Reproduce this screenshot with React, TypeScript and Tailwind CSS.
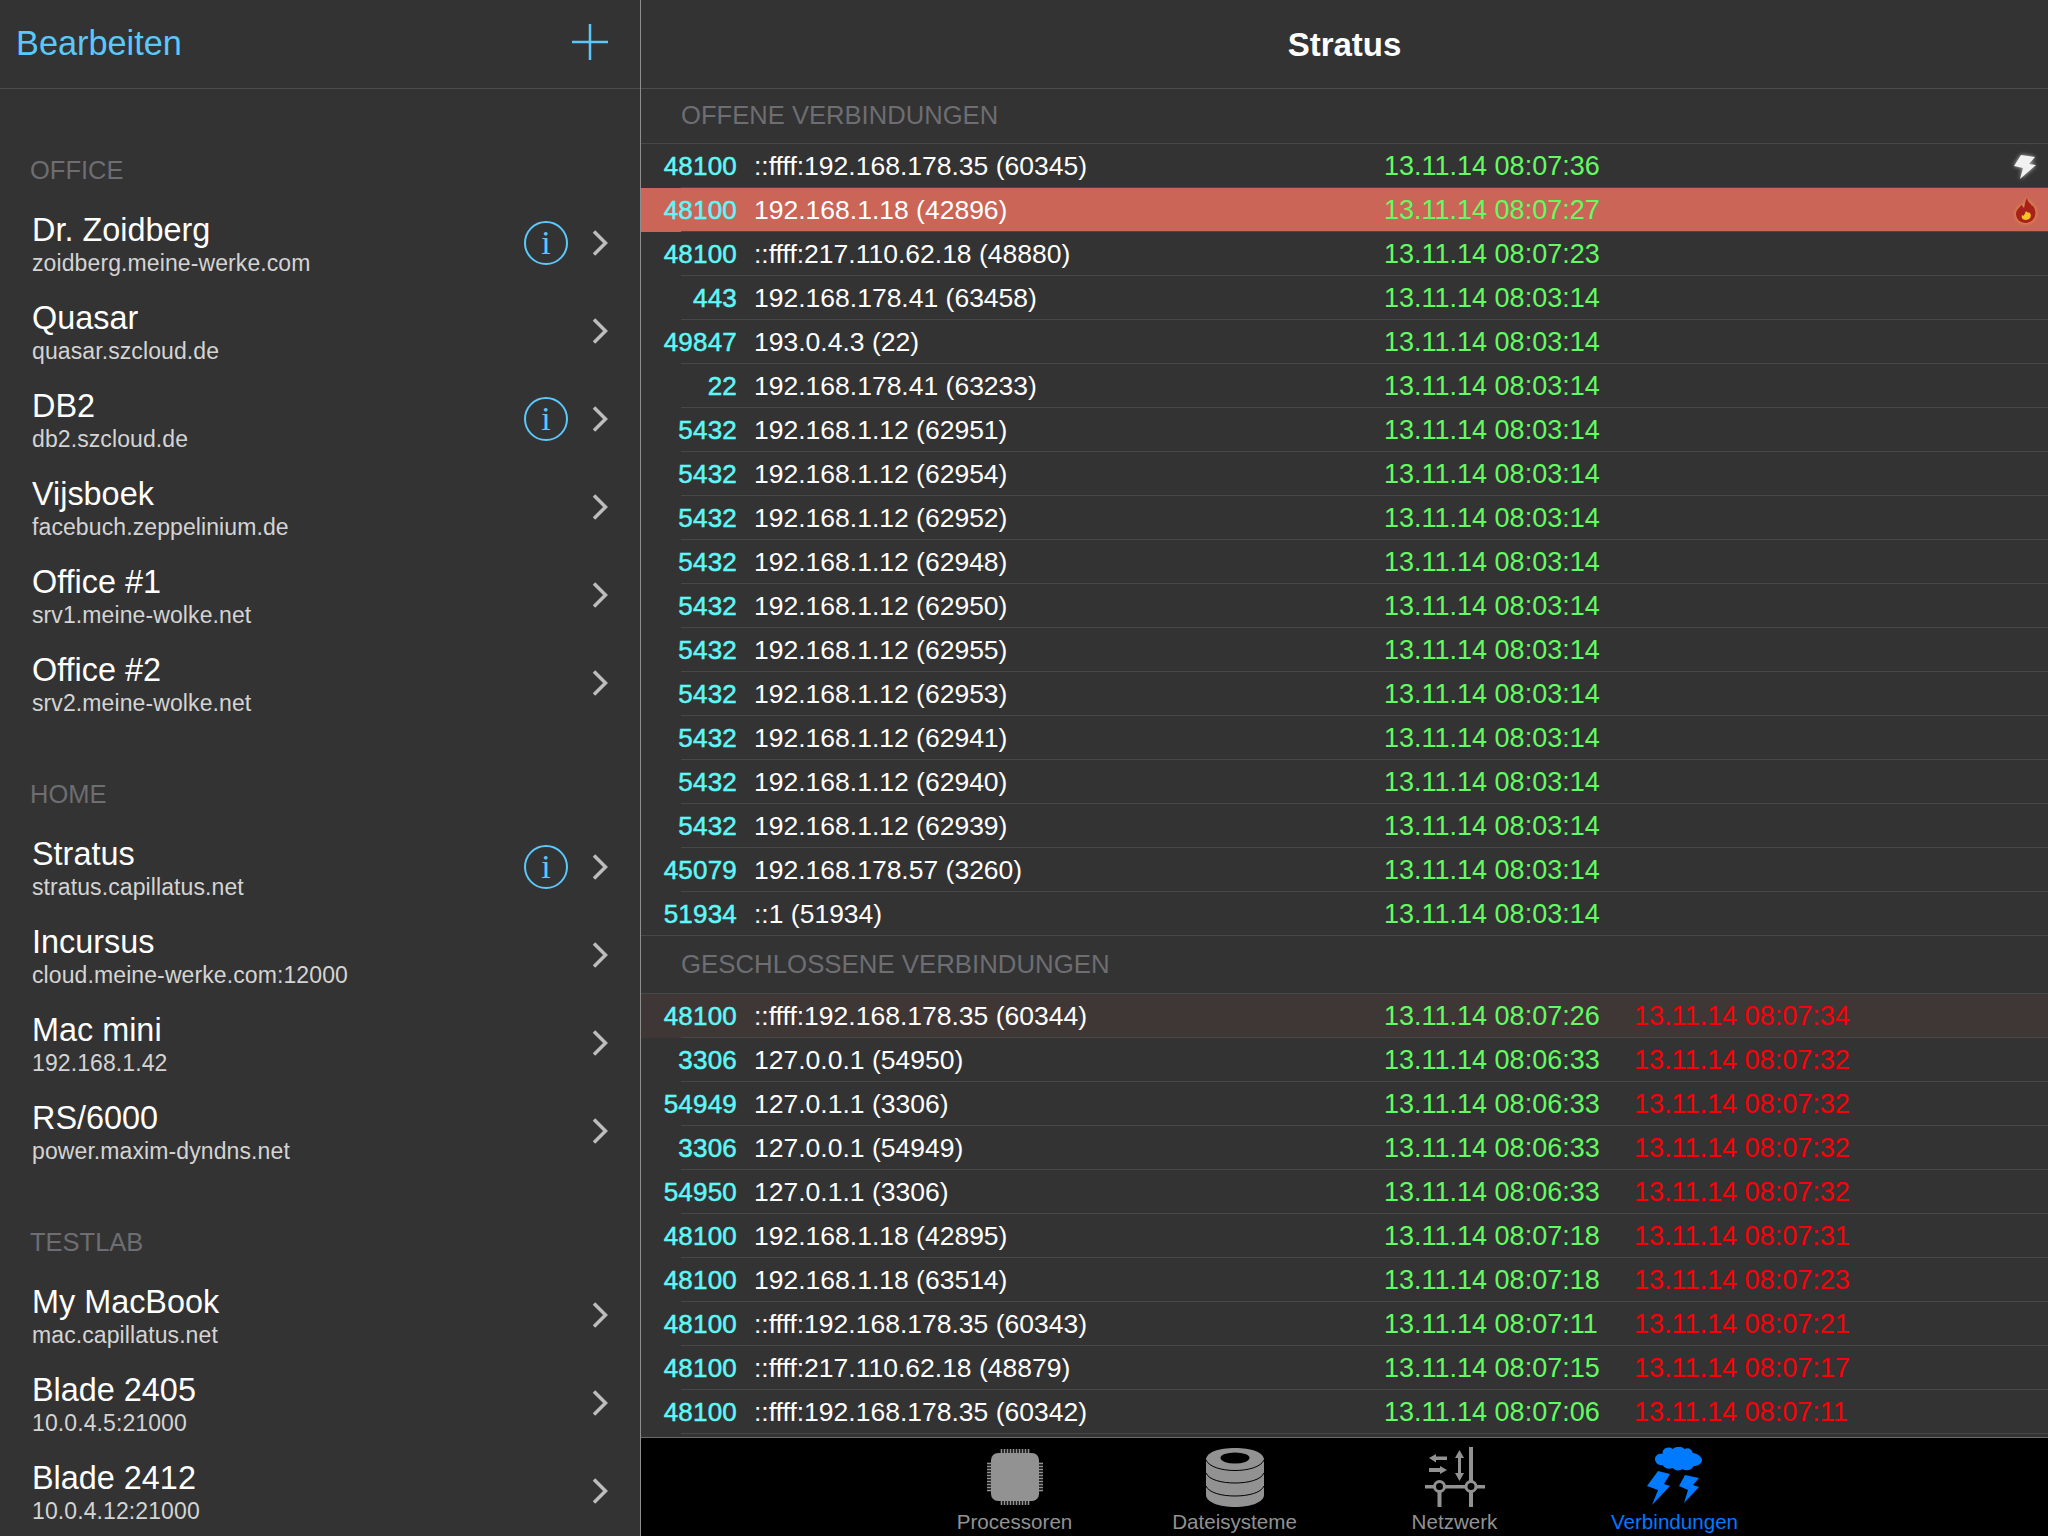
import React from 'react';

type Conn = { port: string; addr: string; opened: string; closed?: string; tone?: 'alert' | 'fade'; icon?: 'bolt' | 'fire' };

const hostGroups = [
  {
    name: 'OFFICE',
    first: true,
    hosts: [
      { title: 'Dr. Zoidberg', sub: 'zoidberg.meine-werke.com', info: true },
      { title: 'Quasar', sub: 'quasar.szcloud.de' },
      { title: 'DB2', sub: 'db2.szcloud.de', info: true },
      { title: 'Vijsboek', sub: 'facebuch.zeppelinium.de' },
      { title: 'Office #1', sub: 'srv1.meine-wolke.net' },
      { title: 'Office #2', sub: 'srv2.meine-wolke.net' },
    ],
  },
  {
    name: 'HOME',
    hosts: [
      { title: 'Stratus', sub: 'stratus.capillatus.net', info: true },
      { title: 'Incursus', sub: 'cloud.meine-werke.com:12000' },
      { title: 'Mac mini', sub: '192.168.1.42' },
      { title: 'RS/6000', sub: 'power.maxim-dyndns.net' },
    ],
  },
  {
    name: 'TESTLAB',
    hosts: [
      { title: 'My MacBook', sub: 'mac.capillatus.net' },
      { title: 'Blade 2405', sub: '10.0.4.5:21000' },
      { title: 'Blade 2412', sub: '10.0.4.12:21000' },
    ],
  },
];

const t0 = '13.11.14 08:03:14';
const openConns: Conn[] = [
  { port: '48100', addr: '::ffff:192.168.178.35 (60345)', opened: '13.11.14 08:07:36', icon: 'bolt' },
  { port: '48100', addr: '192.168.1.18 (42896)', opened: '13.11.14 08:07:27', tone: 'alert', icon: 'fire' },
  { port: '48100', addr: '::ffff:217.110.62.18 (48880)', opened: '13.11.14 08:07:23' },
  { port: '443', addr: '192.168.178.41 (63458)', opened: t0 },
  { port: '49847', addr: '193.0.4.3 (22)', opened: t0 },
  { port: '22', addr: '192.168.178.41 (63233)', opened: t0 },
  { port: '5432', addr: '192.168.1.12 (62951)', opened: t0 },
  { port: '5432', addr: '192.168.1.12 (62954)', opened: t0 },
  { port: '5432', addr: '192.168.1.12 (62952)', opened: t0 },
  { port: '5432', addr: '192.168.1.12 (62948)', opened: t0 },
  { port: '5432', addr: '192.168.1.12 (62950)', opened: t0 },
  { port: '5432', addr: '192.168.1.12 (62955)', opened: t0 },
  { port: '5432', addr: '192.168.1.12 (62953)', opened: t0 },
  { port: '5432', addr: '192.168.1.12 (62941)', opened: t0 },
  { port: '5432', addr: '192.168.1.12 (62940)', opened: t0 },
  { port: '5432', addr: '192.168.1.12 (62939)', opened: t0 },
  { port: '45079', addr: '192.168.178.57 (3260)', opened: t0 },
  { port: '51934', addr: '::1 (51934)', opened: t0 },
];

const closedConns: Conn[] = [
  { port: '48100', addr: '::ffff:192.168.178.35 (60344)', opened: '13.11.14 08:07:26', closed: '13.11.14 08:07:34', tone: 'fade' },
  { port: '3306', addr: '127.0.0.1 (54950)', opened: '13.11.14 08:06:33', closed: '13.11.14 08:07:32' },
  { port: '54949', addr: '127.0.1.1 (3306)', opened: '13.11.14 08:06:33', closed: '13.11.14 08:07:32' },
  { port: '3306', addr: '127.0.0.1 (54949)', opened: '13.11.14 08:06:33', closed: '13.11.14 08:07:32' },
  { port: '54950', addr: '127.0.1.1 (3306)', opened: '13.11.14 08:06:33', closed: '13.11.14 08:07:32' },
  { port: '48100', addr: '192.168.1.18 (42895)', opened: '13.11.14 08:07:18', closed: '13.11.14 08:07:31' },
  { port: '48100', addr: '192.168.1.18 (63514)', opened: '13.11.14 08:07:18', closed: '13.11.14 08:07:23' },
  { port: '48100', addr: '::ffff:192.168.178.35 (60343)', opened: '13.11.14 08:07:11', closed: '13.11.14 08:07:21' },
  { port: '48100', addr: '::ffff:217.110.62.18 (48879)', opened: '13.11.14 08:07:15', closed: '13.11.14 08:07:17' },
  { port: '48100', addr: '::ffff:192.168.178.35 (60342)', opened: '13.11.14 08:07:06', closed: '13.11.14 08:07:11' },
];

function BoltIcon() {
  return (
    <svg width="22" height="26" viewBox="0 0 22 26" className="drop-shadow-[0_0_2px_rgba(255,255,255,0.7)]">
      <path d="M7 1 L21 3 L15 10 L22 11 L6 25 L9 14 L0 12 Z" fill="#f1f1f1" />
    </svg>
  );
}

function FireIcon() {
  return (
    <svg width="20" height="25" viewBox="0 0 20 25" className="drop-shadow-[0_0_2px_rgba(240,170,60,0.9)]">
      <path d="M11 0 C12 5 15 5 16 8 C17 7 18 9 19 12 C21 19 16 25 10 25 C4 25 0 21 0 16 C0 11 4 10 5 7 C7 8 7 9 8 10 C9 6 9 3 11 0 Z" fill="#a8201a" />
      <path d="M10 13 C11 15 13 14 14 15 C16 18 14 22 10 22 C6 22 5 19 6 17 C7 18 8 18 8 17 C9 16 9 15 10 13 Z" fill="#f7c325" />
    </svg>
  );
}

function CpuIcon() {
  const pins = Array.from({ length: 10 }, (_, i) => 14.5 + i * 3);
  return (
    <svg width="56" height="56" viewBox="0 0 56 56" fill="#929292">
      <rect x="4" y="4" width="48" height="48" rx="7" />
      {pins.map((p) => (
        <g key={p}>
          <rect x={p - 0.8} y="0" width="1.6" height="5" />
          <rect x={p - 0.8} y="51" width="1.6" height="5" />
          <rect x="0" y={p - 0.8} width="5" height="1.6" />
          <rect x="51" y={p - 0.8} width="5" height="1.6" />
        </g>
      ))}
    </svg>
  );
}

function DiskIcon() {
  return (
    <svg width="58" height="59" viewBox="0 0 58 59">
      <path d="M0 12 C0 4 13 0 29 0 C45 0 58 4 58 12 L58 47 C58 54 45 59 29 59 C13 59 0 54 0 47 Z" fill="#929292" />
      <ellipse cx="29" cy="10" rx="14.500" ry="5.500" fill="#000" />
      <path d="M0 12 C3 19 16 22.500 29 22.500 C42 22.500 55 19 58 12" fill="none" stroke="#000" strokeWidth="1" />
      <path d="M0 25 C3 32 16 35 29 35 C42 35 55 32 58 25" fill="none" stroke="#000" strokeWidth="1" />
      <path d="M0 38 C3 45 16 48 29 48 C42 48 55 45 58 38" fill="none" stroke="#000" strokeWidth="1" />
    </svg>
  );
}

function NetIcon() {
  return (
    <svg width="60" height="60" viewBox="0 0 60 60" fill="#929292">
      <rect x="44" y="0" width="4" height="34" />
      <rect x="44" y="45" width="4" height="15" />
      <rect x="12.500" y="45" width="4" height="15" />
      <rect x="0" y="38" width="9" height="3.500" />
      <rect x="20" y="38" width="20" height="3.500" />
      <rect x="52" y="38" width="8" height="3.500" />
      <circle cx="14.500" cy="39.500" r="5" fill="none" stroke="#929292" strokeWidth="3" />
      <circle cx="46" cy="39.500" r="5" fill="none" stroke="#929292" strokeWidth="3" />
      <path d="M34.500 3 L39 11 L36 11 L36 26 L39 26 L34.500 34 L30 26 L33 26 L33 11 L30 11 Z" />
      <path d="M4 11 L11 7 L11 9.500 L22 9.500 L22 13 L11 13 L11 15.500 Z" />
      <path d="M22 23 L15 19 L15 21 L4 21 L4 25 L15 25 L15 27 Z" />
    </svg>
  );
}

function StormIcon() {
  return (
    <svg width="56" height="60" viewBox="0 0 56 60" fill="#007aff">
      <g transform="translate(8 0) scale(0.84 1)">
        <path d="M10 3 C13 0 18 0 21 2 C25 -1 32 -1 35 2 C39 0 44 2 45 6 C50 6 56 10 56 13 C56 17 50 19 46 19 C43 24 36 24 33 22 C29 24 24 24 21 21 C16 23 11 21 9 18 C5 19 0 16 0 12 C0 8 5 6 9 7 C9 5 9 4 10 3 Z" />
      </g>
      <path d="M11 24 L23 27 L17 37 L23 39 L5 58 L11 43 L0 39 Z" />
      <path d="M38 28 L52 31 L46 38 L52 40 L37 56 L41 43 L32 39 Z" />
    </svg>
  );
}

function InfoIcon() {
  return (
    <div className="flex h-[44px] w-[44px] items-center justify-center rounded-full border-2 border-[#5ac8fa] text-[#5ac8fa]">
      <span className="text-[34px] leading-none [font-family:'Liberation_Serif',serif]">i</span>
    </div>
  );
}

function Chevron() {
  return (
    <svg width="16" height="26" viewBox="0 0 16 26" fill="none" stroke="#bdbdbd" strokeWidth="3.500">
      <path d="M2 1.500 L13.500 13 L2 24.500" />
    </svg>
  );
}

function ConnRow({ c }: { c: Conn }) {
  const bg = c.tone === 'alert' ? 'bg-[#ca6558]' : c.tone === 'fade' ? 'bg-[#3f3736]' : '';
  return (
    <div className={bg}>
      <div className="flex h-[43px] items-center pt-[2px] pr-[12px] whitespace-nowrap">
        <span className="w-[96px] text-right text-[26px] tracking-[0.2px] text-[#5ff7f7] [-webkit-text-stroke:0.5px_#5ff7f7]">{c.port}</span>
        <span className="ml-[17px] w-[630px] text-[26.5px] text-white">{c.addr}</span>
        <span className="w-[250px] text-[27px] text-[#62fb62]">{c.opened}</span>
        <span className="text-[27px] text-[#fb0007]">{c.closed}</span>
        {c.icon === 'bolt' && <span className="ml-auto flex"><BoltIcon /></span>}
        {c.icon === 'fire' && <span className="ml-auto flex"><FireIcon /></span>}
      </div>
      <div className="ml-[40px] h-px bg-[#484848]" />
    </div>
  );
}

const tabs = [
  { label: 'Processoren', icon: <CpuIcon /> },
  { label: 'Dateisysteme', icon: <DiskIcon /> },
  { label: 'Netzwerk', icon: <NetIcon /> },
  { label: 'Verbindungen', icon: <StormIcon />, active: true },
];

export default function App() {
  return (
    <div className="flex h-[1536px] w-[2048px] overflow-hidden bg-[#333333] [font-family:'Liberation_Sans',Arial,sans-serif]">
      <aside className="w-[641px] shrink-0 border-r border-[#8e8e8e]">
        <div className="flex h-[89px] items-center justify-between border-b border-[#4c4c4c] pl-[16px] pr-[32px]">
          <span className="text-[34.3px] text-[#5ac8fa]">Bearbeiten</span>
          <svg width="36" height="36" viewBox="0 0 36 36" stroke="#5ac8fa" strokeWidth="2.500" className="mb-[5px]">
            <path d="M18 0 V36 M0 18 H36" />
          </svg>
        </div>
        {hostGroups.map((group) => (
          <section key={group.name}>
            <div className={`flex items-end pl-[30px] pb-[14px] text-[25.500px] text-[#6d6d72] ${group.first ? 'h-[110px]' : 'h-[96px]'}`}>
              <span className="leading-[30px]">{group.name}</span>
            </div>
            {group.hosts.map((h) => (
              <div key={h.title} className="flex h-[88px] items-center pl-[32px] pr-[32px]">
                <div className="min-w-0 flex-1">
                  <div className="text-[32.4px] leading-[38px] text-white">{h.title}</div>
                  <div className="mt-px text-[23px] leading-[26px] tracking-[0.1px] text-[#d4d4d4]">{h.sub}</div>
                </div>
                {h.info && <InfoIcon />}
                <span className="ml-[24px] flex"><Chevron /></span>
              </div>
            ))}
          </section>
        ))}
      </aside>
      <main className="flex min-w-0 flex-1 flex-col">
        <div className="flex h-[89px] shrink-0 items-center justify-center border-b border-[#4c4c4c] pt-px text-[33px] font-semibold text-white">
          Stratus
        </div>
        <div className="min-h-0 flex-1 overflow-hidden">
          <div className="flex h-[55px] items-center border-b border-[#484848] pb-[2px] pl-[40px] text-[25.600px] text-[#6d6d72]">
            OFFENE VERBINDUNGEN
          </div>
          {openConns.map((c, i) => (
            <ConnRow key={i} c={c} />
          ))}
          <div className="h-px -mt-px bg-[#484848]" />
          <div className="flex h-[58px] items-center border-b border-[#484848] pl-[40px] text-[25.800px] text-[#6d6d72]">
            GESCHLOSSENE VERBINDUNGEN
          </div>
          {closedConns.map((c, i) => (
            <ConnRow key={i} c={c} />
          ))}
        </div>
        <nav className="flex h-[99px] shrink-0 justify-center border-t border-[#6a6a6a] bg-black">
          {tabs.map((t) => (
            <div key={t.label} className="flex w-[220px] flex-col items-center">
              <div className="flex h-[72px] items-center pt-[6px]">{t.icon}</div>
              <span className={`text-[20.600px] leading-[24px] ${t.active ? 'text-[#007aff]' : 'text-[#929292]'}`}>{t.label}</span>
            </div>
          ))}
        </nav>
      </main>
    </div>
  );
}
